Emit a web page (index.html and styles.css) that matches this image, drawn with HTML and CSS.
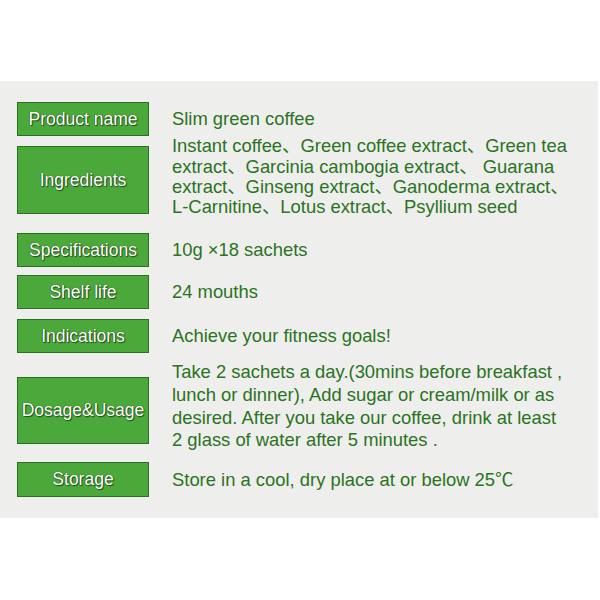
FILE: index.html
```html
<!DOCTYPE html>
<html>
<head>
<meta charset="utf-8">
<link rel="stylesheet" href="styles.css">
</head>
<body>
<div class="panel">
  <div class="row h34">
    <div class="label">Product name</div>
    <div class="value">Slim green coffee</div>
  </div>
  <div class="row h68 g10">
    <div class="label">Ingredients</div>
    <div class="value tight">Instant coffee、Green coffee extract、Green tea<br>extract、Garcinia cambogia extract、 Guarana<br>extract、Ginseng extract、Ganoderma extract、<br>L-Carnitine、Lotus extract、Psyllium seed</div>
  </div>
  <div class="row h34 g19">
    <div class="label">Specifications</div>
    <div class="value">10g ×18 sachets</div>
  </div>
  <div class="row h34 g8">
    <div class="label">Shelf life</div>
    <div class="value">24 mouths</div>
  </div>
  <div class="row h34 g10">
    <div class="label">Indications</div>
    <div class="value">Achieve your fitness goals!</div>
  </div>
  <div class="row h67 g24">
    <div class="label">Dosage&amp;Usage</div>
    <div class="value loose">Take 2 sachets a day.(30mins before breakfast ,<br>lunch or dinner), Add sugar or cream/milk or as<br>desired. After you take our coffee, drink at least<br>2 glass of water after 5 minutes .</div>
  </div>
  <div class="row h35 g18">
    <div class="label">Storage</div>
    <div class="value">Store in a cool, dry place at or below 25℃</div>
  </div>
</div>
</body>
</html>
```
FILE: styles.css
```css
html, body {
  margin: 0;
  padding: 0;
  background: #ffffff;
}
body {
  font-family: "Liberation Sans", Arial, "Noto Sans CJK SC", sans-serif;
}
.panel {
  margin-top: 81px;
  width: 598px;
  height: 437px;
  box-sizing: border-box;
  padding: 21px 0 0 17px;
  background: #eeefed;
  display: flex;
  flex-direction: column;
}
.row {
  flex: none;
  display: flex;
  align-items: center;
  gap: 23px;
}
.h34 { height: 34px; }
.h35 { height: 35px; }
.h67 { height: 67px; }
.h68 { height: 68px; }
.g8 { margin-top: 8px; }
.g10 { margin-top: 10px; }
.g18 { margin-top: 18px; }
.g19 { margin-top: 19px; }
.g24 { margin-top: 24px; }
.label {
  flex: none;
  align-self: stretch;
  width: 132px;
  box-sizing: border-box;
  background: #4ba83b;
  border: 1px solid #2b6f22;
  color: #ffffff;
  font-size: 17.5px;
  display: flex;
  align-items: center;
  justify-content: center;
  text-shadow: 0 0 1px #1d4f15, 1px 1px 1px #1d4f15, -0.5px -0.5px 0.5px #2a6a1f;
}
.value {
  color: #2c7223;
  font-size: 18.4px;
  line-height: 20px;
  white-space: nowrap;
}
.tight { line-height: 20.3px; margin-bottom: 6px; }
.loose { line-height: 22.6px; margin-bottom: 8px; }
```
